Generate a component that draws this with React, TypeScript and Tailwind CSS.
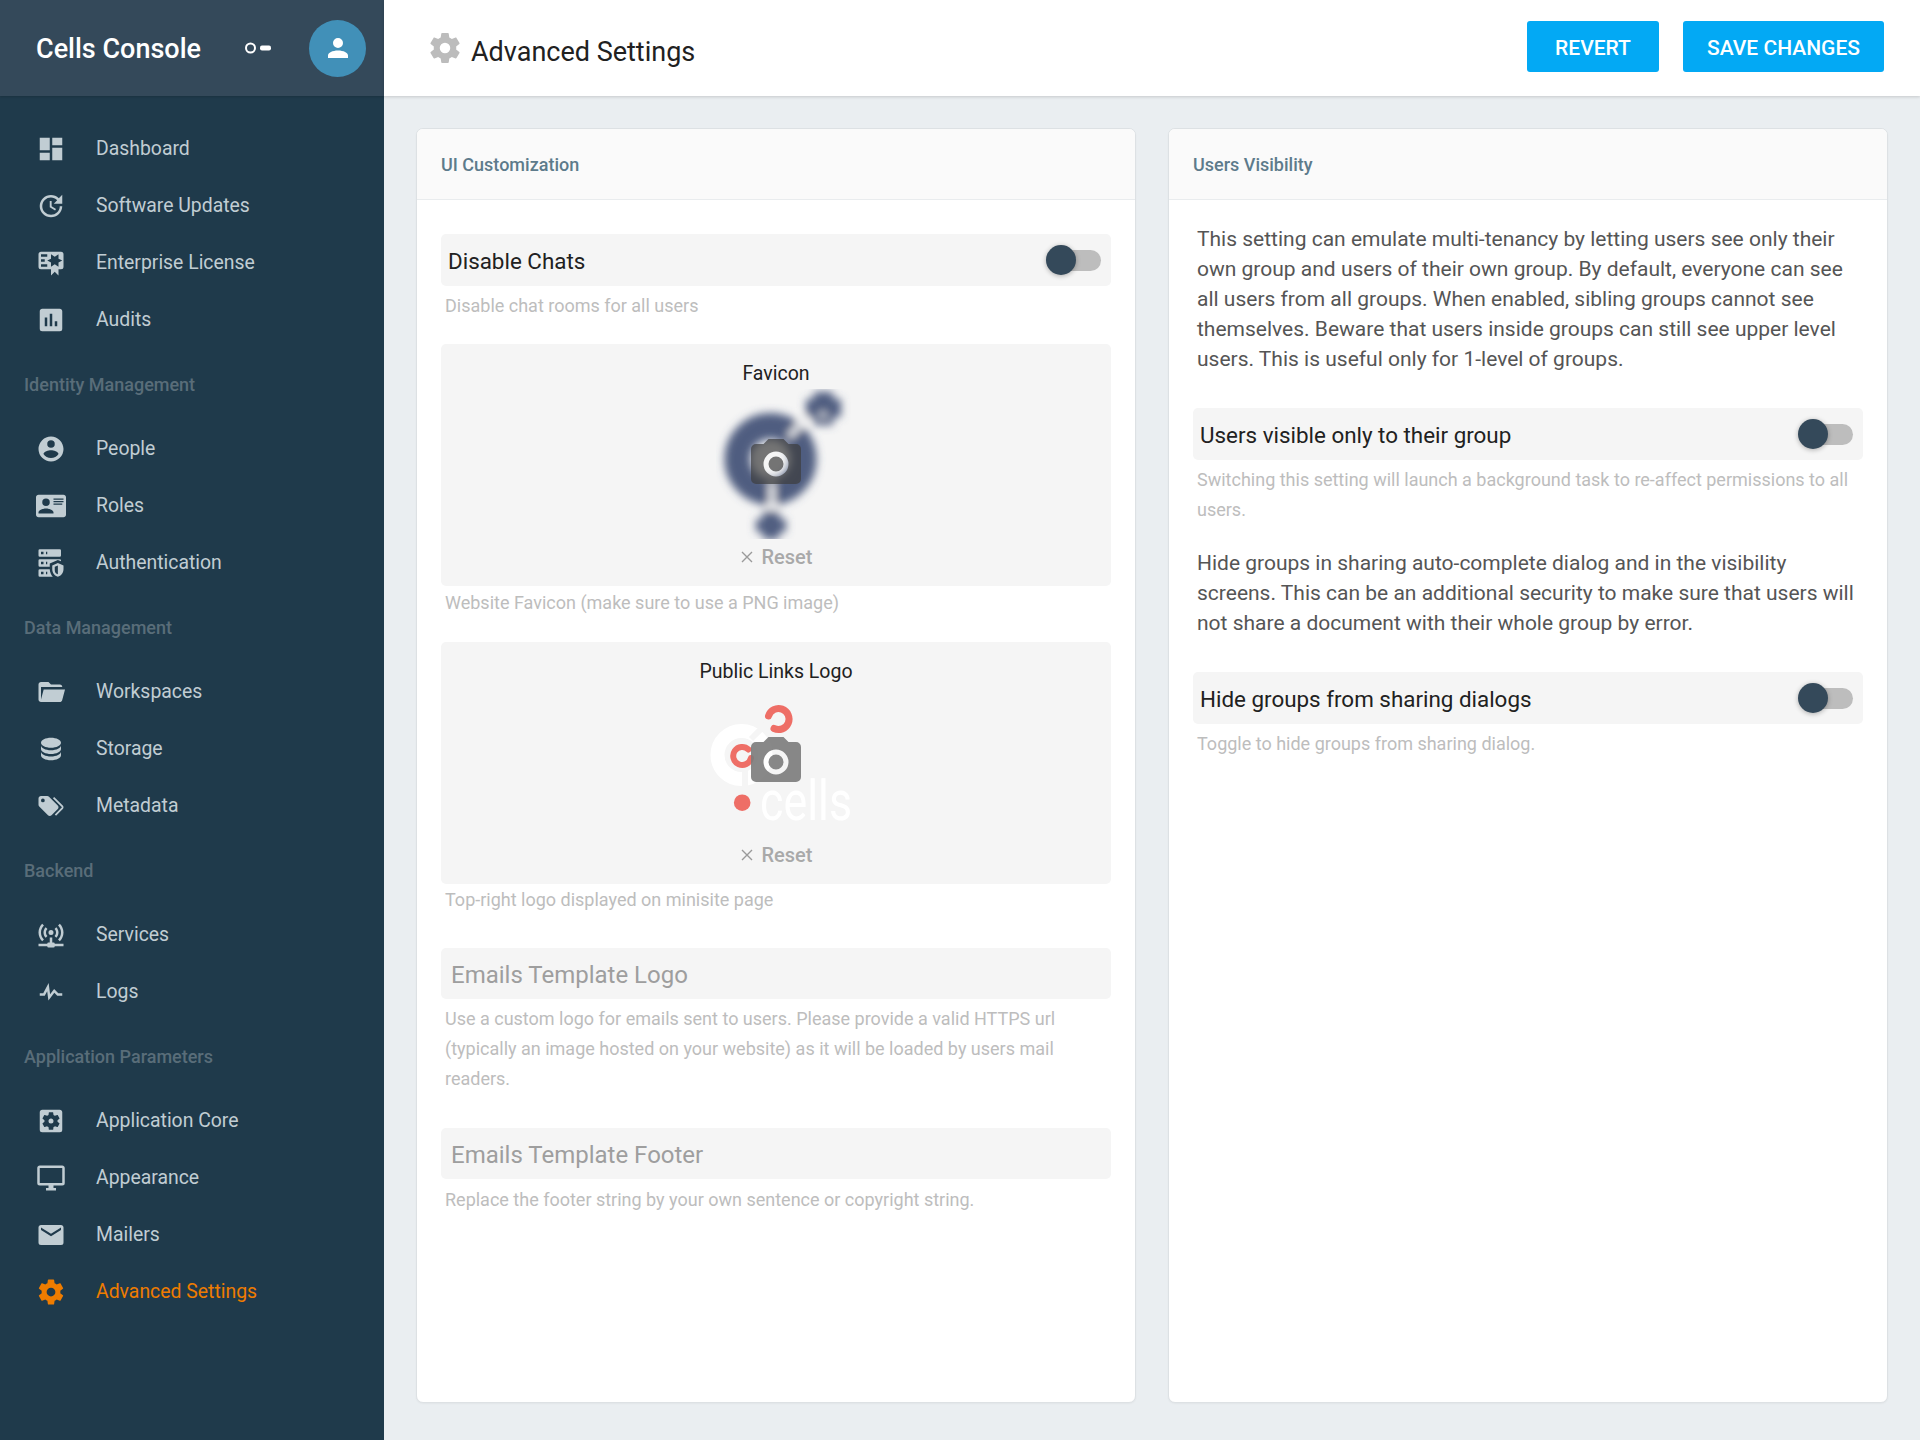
const P = {
  dashboard: "M13,3V9H21V3M13,21H21V11H13M3,21H11V15H3M3,13H11V3H3V13Z",
  update: "M21,10.12H14.22L16.96,7.3C14.23,4.6 9.81,4.5 7.08,7.2C4.35,9.91 4.35,14.28 7.08,17C9.81,19.7 14.23,19.7 16.96,17C18.32,15.65 19,14.08 19,12.1H21C21,14.08 20.12,16.65 18.36,18.39C14.85,21.87 9.15,21.87 5.64,18.39C2.14,14.92 2.11,9.28 5.62,5.81C9.13,2.34 14.76,2.34 18.27,5.81L21,3V10.12M12.5,8V12.25L16,14.33L15.28,15.54L11,13V8H12.5Z",
  certificate: "M4,3C2.89,3 2,3.89 2,5V15A2,2 0 0,0 4,17H12V22L15,19L18,22V17H20A2,2 0 0,0 22,15V8L22,6V5A2,2 0 0,0 20,3H16V3H4M12,5L15,7L18,5V8.5L21,10L18,11.5V15L15,13L12,15V11.5L9,10L12,8.5V5M4,5H9V7H4V5M4,9H7V11H4V9M4,13H9V15H4V13Z",
  poll: "M17,17H15V13H17M13,17H11V7H13M9,17H7V10H9M19,3H5C3.89,3 3,3.89 3,5V19A2,2 0 0,0 5,21H19A2,2 0 0,0 21,19V5C21,3.89 20.1,3 19,3Z",
  accountCircle: "M12,19.2C9.5,19.2 7.29,17.92 6,16C6.03,14 10,12.9 12,12.9C14,12.9 17.97,14 18,16C16.71,17.92 14.5,19.2 12,19.2M12,5A3,3 0 0,1 15,8A3,3 0 0,1 12,11A3,3 0 0,1 9,8A3,3 0 0,1 12,5M12,2A10,10 0 0,0 2,12A10,10 0 0,0 12,22A10,10 0 0,0 22,12C22,6.47 17.5,2 12,2Z",
  card: "M2,3H22C23.05,3 24,3.95 24,5V19C24,20.05 23.05,21 22,21H2C0.95,21 0,20.05 0,19V5C0,3.95 0.95,3 2,3M14,6V7H22V6H14M14,8V9H21.5L22,9V8H14M14,10V11H21V10H14M8,13.91C6,13.91 2,15 2,17V18H14V17C14,15 10,13.91 8,13.91M8,6A3,3 0 0,0 5,9A3,3 0 0,0 8,12A3,3 0 0,0 11,9A3,3 0 0,0 8,6Z",
  serverSecurity: "M3,1H19A1,1 0 0,1 20,2V6A1,1 0 0,1 19,7H3A1,1 0 0,1 2,6V2A1,1 0 0,1 3,1M3,9H19A1,1 0 0,1 20,10V10.67L17.5,9.56L11,12.44V15H3A1,1 0 0,1 2,14V10A1,1 0 0,1 3,9M3,17H11C11.06,19.25 12,21.4 13.46,23H3A1,1 0 0,1 2,22V18A1,1 0 0,1 3,17M8,5H9V3H8V5M8,13H9V11H8V13M8,21H9V19H8V21M4,3V5H6V3H4M4,11V13H6V11H4M4,19V21H6V19H4M17.5,12L22,14V17C22,19.78 20.08,22.37 17.5,23C14.92,22.37 13,19.78 13,17V14L17.5,12M17.5,13.94L15,15.06V17.72C15,19.26 16.07,20.7 17.5,21.06V13.94Z",
  folder: "M19,20H4C2.89,20 2,19.1 2,18V6C2,4.89 2.89,4 4,4H10L12,6H19A2,2 0 0,1 21,8H21L4,8V18L6.14,10H23.21L20.93,18.5C20.7,19.37 19.92,20 19,20Z",
  database: "M12,3C7.58,3 4,4.79 4,7C4,9.21 7.58,11 12,11C16.42,11 20,9.21 20,7C20,4.79 16.42,3 12,3M4,9V12C4,14.21 7.58,16 12,16C16.42,16 20,14.21 20,12V9C20,11.21 16.42,13 12,13C7.58,13 4,11.21 4,9M4,14V17C4,19.21 7.58,21 12,21C16.42,21 20,19.21 20,17V14C20,16.21 16.42,18 12,18C7.58,18 4,16.21 4,14Z",
  tags: "M5.5,9A1.5,1.5 0 0,0 7,7.5A1.5,1.5 0 0,0 5.5,6A1.5,1.5 0 0,0 4,7.5A1.5,1.5 0 0,0 5.5,9M17.41,11.58C17.77,11.94 18,12.44 18,13C18,13.55 17.78,14.05 17.41,14.41L12.41,19.41C12.05,19.77 11.55,20 11,20C10.45,20 9.95,19.78 9.58,19.41L2.59,12.42C2.22,12.05 2,11.55 2,11V6C2,4.89 2.89,4 4,4H9C9.55,4 10.05,4.22 10.41,4.58L17.41,11.58M13.54,5.71L14.54,4.71L21.41,11.58C21.78,11.94 22,12.45 22,13C22,13.55 21.78,14.05 21.42,14.41L16.04,19.79L15.04,18.79L20.75,13L13.54,5.71Z",
  network: "M4.93,2.93C3.12,4.74 2,7.24 2,10C2,12.76 3.12,15.26 4.93,17.07L6.34,15.66C4.89,14.22 4,12.22 4,10C4,7.79 4.89,5.78 6.34,4.34L4.93,2.93M19.07,2.93L17.66,4.34C19.11,5.78 20,7.79 20,10C20,12.22 19.11,14.22 17.66,15.66L19.07,17.07C20.88,15.26 22,12.76 22,10C22,7.24 20.88,4.74 19.07,2.93M7.76,5.76C6.67,6.85 6,8.35 6,10C6,11.65 6.67,13.15 7.76,14.24L9.17,12.83C8.45,12.11 8,11.11 8,10C8,8.89 8.45,7.89 9.17,7.17L7.76,5.76M16.24,5.76L14.83,7.17C15.55,7.89 16,8.89 16,10C16,11.11 15.55,12.11 14.83,12.83L16.24,14.24C17.33,13.15 18,11.65 18,10C18,8.35 17.33,6.85 16.24,5.76M12,8A2,2 0 0,0 10,10A2,2 0 0,0 12,12A2,2 0 0,0 14,10A2,2 0 0,0 12,8M11,14V18H10A1,1 0 0,0 9,19H2V21H9A1,1 0 0,0 10,22H14A1,1 0 0,0 15,21H22V19H15A1,1 0 0,0 14,18H13V14H11Z",
  pulse: "M3,13H5.79L10.1,4.79L11.28,13.75L14.5,9.66L17.83,13H21V15H17L14.67,12.67L9.92,18.73L8.94,11.31L7,15H3V13Z",
  settingsBox: "M17.25,12C17.25,12.23 17.23,12.46 17.2,12.68L18.68,13.84C18.81,13.95 18.85,14.13 18.76,14.29L17.36,16.71C17.27,16.86 17.09,16.92 16.93,16.86L15.19,16.16C14.83,16.44 14.43,16.67 14,16.85L13.75,18.7C13.72,18.87 13.57,19 13.4,19H10.6C10.43,19 10.28,18.87 10.25,18.7L10,16.85C9.56,16.67 9.17,16.44 8.81,16.16L7.07,16.86C6.91,16.92 6.73,16.86 6.64,16.71L5.24,14.29C5.15,14.13 5.19,13.95 5.32,13.84L6.8,12.68C6.77,12.46 6.75,12.23 6.75,12C6.75,11.77 6.77,11.54 6.8,11.32L5.32,10.16C5.19,10.05 5.15,9.87 5.24,9.71L6.64,7.29C6.73,7.14 6.91,7.08 7.07,7.14L8.81,7.84C9.17,7.56 9.56,7.33 10,7.15L10.25,5.3C10.28,5.13 10.43,5 10.6,5H13.4C13.57,5 13.72,5.13 13.75,5.3L14,7.15C14.43,7.33 14.83,7.56 15.19,7.84L16.93,7.14C17.09,7.08 17.27,7.14 17.36,7.29L18.76,9.71C18.85,9.87 18.81,10.05 18.68,10.16L17.2,11.32C17.23,11.54 17.25,11.77 17.25,12M19,3H5C3.89,3 3,3.89 3,5V19A2,2 0 0,0 5,21H19A2,2 0 0,0 21,19V5C21,3.89 20.1,3 19,3M12,10C10.89,10 10,10.89 10,12A2,2 0 0,0 12,14A2,2 0 0,0 14,12C14,10.89 13.1,10 12,10Z",
  monitor: "M21,16H3V4H21M21,2H3C1.89,2 1,2.89 1,4V16A2,2 0 0,0 3,18H10V20H8V22H16V20H14V18H21A2,2 0 0,0 23,16V4C23,2.89 22.1,2 21,2Z",
  email: "M20,8L12,13L4,8V6L12,11L20,6M20,4H4C2.89,4 2,4.89 2,6V18A2,2 0 0,0 4,20H20A2,2 0 0,0 22,18V6C22,4.89 21.1,4 20,4Z",
  settings: "M12,15.5A3.5,3.5 0 0,1 8.5,12A3.5,3.5 0 0,1 12,8.5A3.5,3.5 0 0,1 15.5,12A3.5,3.5 0 0,1 12,15.5M19.43,12.97C19.47,12.65 19.5,12.33 19.5,12C19.5,11.67 19.47,11.34 19.43,11L21.54,9.37C21.73,9.22 21.78,8.95 21.66,8.73L19.66,5.27C19.54,5.05 19.27,4.96 19.05,5.05L16.56,6.05C16.04,5.66 15.5,5.32 14.87,5.07L14.5,2.42C14.46,2.18 14.25,2 14,2H10C9.75,2 9.54,2.18 9.5,2.42L9.13,5.07C8.5,5.32 7.96,5.66 7.44,6.05L4.95,5.05C4.73,4.96 4.46,5.05 4.34,5.27L2.34,8.73C2.21,8.95 2.27,9.22 2.46,9.37L4.57,11C4.53,11.34 4.5,11.67 4.5,12C4.5,12.33 4.53,12.65 4.57,12.97L2.46,14.63C2.27,14.78 2.21,15.05 2.34,15.27L4.34,18.73C4.46,18.95 4.73,19.03 4.95,18.95L7.44,17.94C7.96,18.34 8.5,18.68 9.13,18.93L9.5,21.58C9.54,21.82 9.75,22 10,22H14C14.25,22 14.46,21.82 14.5,21.58L14.87,18.93C15.5,18.67 16.04,18.34 16.56,17.94L19.05,18.95C19.27,19.03 19.54,18.95 19.66,18.73L21.66,15.27C21.78,15.05 21.73,14.78 21.54,14.63L19.43,12.97Z",
  account: "M12,4A4,4 0 0,1 16,8A4,4 0 0,1 12,12A4,4 0 0,1 8,8A4,4 0 0,1 12,4M12,14C16.42,14 20,15.79 20,18V20H4V18C4,15.79 7.58,14 12,14Z",
  camera: "M4,4H7L9,2H15L17,4H20A2,2 0 0,1 22,6V18A2,2 0 0,1 20,20H4A2,2 0 0,1 2,18V6A2,2 0 0,1 4,4M12,7A5,5 0 0,0 7,12A5,5 0 0,0 12,17A5,5 0 0,0 17,12A5,5 0 0,0 12,7M12,9A3,3 0 0,1 15,12A3,3 0 0,1 12,15A3,3 0 0,1 9,12A3,3 0 0,1 12,9Z",
};

function Icon({ d, className }: { d: string; className: string }) {
  return (
    <svg viewBox="0 0 24 24" fill="currentColor" className={className}>
      <path d={d} />
    </svg>
  );
}

const NAV: { title?: string; items: { label: string; icon: string; active?: boolean }[] }[] = [
  {
    items: [
      { label: "Dashboard", icon: P.dashboard },
      { label: "Software Updates", icon: P.update },
      { label: "Enterprise License", icon: P.certificate },
      { label: "Audits", icon: P.poll },
    ],
  },
  {
    title: "Identity Management",
    items: [
      { label: "People", icon: P.accountCircle },
      { label: "Roles", icon: P.card },
      { label: "Authentication", icon: P.serverSecurity },
    ],
  },
  {
    title: "Data Management",
    items: [
      { label: "Workspaces", icon: P.folder },
      { label: "Storage", icon: P.database },
      { label: "Metadata", icon: P.tags },
    ],
  },
  {
    title: "Backend",
    items: [
      { label: "Services", icon: P.network },
      { label: "Logs", icon: P.pulse },
    ],
  },
  {
    title: "Application Parameters",
    items: [
      { label: "Application Core", icon: P.settingsBox },
      { label: "Appearance", icon: P.monitor },
      { label: "Mailers", icon: P.email },
      { label: "Advanced Settings", icon: P.settings, active: true },
    ],
  },
];

function Sidebar() {
  return (
    <aside className="w-[384px] h-full shrink-0 bg-[#1f3a4b] flex flex-col">
      <div className="h-[96px] bg-[#34495a] flex items-center pl-[36px] pr-[18px] shadow-[0_1px_2px_rgba(0,0,0,0.15)]">
        <span className="text-[27px] font-medium text-white leading-none mt-[2px]">Cells Console</span>
        <svg viewBox="0 0 26 12" className="w-[26px] h-[12px] ml-[44px] text-white" fill="none">
          <circle cx="5.5" cy="6" r="4.5" stroke="currentColor" strokeWidth="2" />
          <rect x="15" y="3.5" width="11" height="5" rx="2" fill="currentColor" />
        </svg>
        <div className="ml-auto w-[57px] h-[57px] rounded-full bg-[#4190b8] flex items-center justify-center">
          <Icon d={P.account} className="w-[30px] h-[30px] text-white" />
        </div>
      </div>
      <nav className="pt-[24px]">
        {NAV.map((g, i) => (
          <div key={i}>
            {g.title && (
              <div className="h-[72px] pl-[24px] flex items-center text-[18px] font-medium text-[#596d79]">
                {g.title}
              </div>
            )}
            {g.items.map((it) => (
              <div
                key={it.label}
                className={`h-[57px] flex items-center text-[19.4px] ${it.active ? "text-[#ef7c00]" : "text-[#c1cdd3]"}`}
              >
                <div className="w-[96px] pl-[36px] shrink-0 flex">
                  <Icon d={it.icon} className="w-[30px] h-[30px]" />
                </div>
                <span className="pt-[1px]">{it.label}</span>
              </div>
            ))}
          </div>
        ))}
      </nav>
    </aside>
  );
}

function Help({ children, className = "" }: { children: React.ReactNode; className?: string }) {
  return <div className={`pl-[4px] text-[18px] leading-[30px] text-[#bdbdbd] ${className}`}>{children}</div>;
}

function ToggleRow({ label }: { label: string }) {
  return (
    <div className="h-[52px] rounded-[5px] bg-[#f5f5f5] flex items-center justify-between pl-[7px] pr-[10px]">
      <span className="text-[22.4px] text-[#212121] pt-[3px]">{label}</span>
      <div className="relative w-[55px] h-[30px] flex items-center justify-end">
        <div className="w-[45px] h-[21px] rounded-full bg-[#bdbdbd]" />
        <div className="absolute left-0 top-0 w-[30px] h-[30px] rounded-full bg-[#34495a] shadow-[0_1px_5px_rgba(0,0,0,0.3)]" />
      </div>
    </div>
  );
}

function FaviconArt() {
  return (
    <svg viewBox="0 0 150 150" className="w-[150px] h-[150px]">
      <defs>
        <filter id="b1" x="-20%" y="-20%" width="140%" height="140%">
          <feGaussianBlur stdDeviation="4" />
        </filter>
      </defs>
      <g filter="url(#b1)">
        <circle cx="69.5" cy="70" r="33" fill="none" stroke="#4f5d80" strokeWidth="26" />
        <path d="M88 48 L108 26" stroke="#f5f5f5" strokeWidth="6" />
        <path d="M71 94 L71 122" stroke="#f5f5f5" strokeWidth="6" />
        <path d="M113 3 H132 V10 H140 V28 H132 V36 H113 V28 H105 V10 H113 Z" fill="#4f5d80" />
        <circle cx="122" cy="26" r="4" fill="#c9cdd6" />
        <path d="M62 122 H78 V130 H85 V143 H78 V150 H62 V143 H55 V130 H62 Z" fill="#4f5d80" />
      </g>
    </svg>
  );
}

function LogoArt() {
  return (
    <svg viewBox="0 0 150 150" className="w-[150px] h-[150px] overflow-visible">
      <circle cx="40.5" cy="68" r="24" fill="none" stroke="#ffffff" strokeWidth="14" />
      <path d="M50 52 L72 30" stroke="#f5f5f5" strokeWidth="6" />
      <path d="M44 84 L44 104" stroke="#f5f5f5" strokeWidth="6" />
      <path d="M67.5 29 A10.5 10.5 0 1 1 73 41.5" fill="none" stroke="#ee6e66" strokeWidth="7" strokeLinecap="round" />
      <path d="M47.5 62.5 A9 9 0 1 0 50 71" fill="none" stroke="#ee6e66" strokeWidth="6" strokeLinecap="round" />
      <circle cx="41.2" cy="115.7" r="8.3" fill="#ee6e66" />
      <text x="59" y="133" fontFamily="Roboto, sans-serif" fontWeight="400" fontSize="56" fill="#ffffff" textLength="92" lengthAdjust="spacingAndGlyphs">
        cells
      </text>
    </svg>
  );
}

function ImageField({ label, art, faded }: { label: string; art: React.ReactNode; faded?: boolean }) {
  return (
    <div className="h-[242px] rounded-[5px] bg-[#f5f5f5] flex flex-col items-center pt-[15px]">
      <div className="text-[19.5px] leading-[30px] text-[#212121]">{label}</div>
      <div className="relative w-[300px] h-[150px] flex items-start justify-center">
        {art}
        <div className="absolute inset-0 flex items-center justify-center">
          <Icon d={P.camera} className={`w-[60px] h-[60px] ${faded ? "text-[#3d3d3d]/70" : "text-[#7b7b7b]/90"}`} />
        </div>
      </div>
      <div className="flex items-center gap-[8px] text-[20px] leading-[30px] font-medium text-[#a9a9a9] mt-[3px]">
        <svg viewBox="0 0 14 14" className="w-[14px] h-[14px]" fill="none" stroke="#9a9a9a" strokeWidth="1.4">
          <path d="M2 2 L12 12 M12 2 L2 12" />
        </svg>
        <span>Reset</span>
      </div>
    </div>
  );
}

function TextField({ label }: { label: string }) {
  return (
    <div className="h-[51px] rounded-[5px] bg-[#f5f5f5] flex items-center pl-[10px] text-[24px] text-[#9e9e9e] pt-[3px]">
      {label}
    </div>
  );
}

function Card({ title, children }: { title: string; children: React.ReactNode }) {
  return (
    <section className="rounded-[7px] border border-[#dde1e4] bg-white overflow-hidden flex flex-col shadow-[0_1px_2px_rgba(0,0,0,0.04)]">
      <header className="h-[71px] shrink-0 bg-[#fafafa] border-b border-[#e9ecee] flex items-center pl-[24px] text-[18px] font-medium text-[#5d7b8b]">
        {title}
      </header>
      {children}
    </section>
  );
}

export default function App() {
  return (
    <div className="w-[1920px] h-[1440px] flex overflow-hidden font-['Roboto',sans-serif] bg-[#eaeef1]">
      <Sidebar />
      <main className="flex-1 flex flex-col min-w-0">
        <div className="h-[96px] shrink-0 bg-white shadow-[0_1px_3px_rgba(0,0,0,0.16)] flex items-center pl-[43px] pr-[36px]">
          <Icon d={P.settings} className="w-[36px] h-[36px] text-[#bcbcbc]" />
          <h1 className="ml-[8px] text-[27px] font-normal text-[#212121] leading-none mt-[8px]">Advanced Settings</h1>
          <div className="ml-auto flex gap-[24px] mb-[3px]">
            <button className="w-[132px] h-[51px] pt-[4px] rounded-[3px] bg-[#03a9f4] text-white text-[21px] font-medium">REVERT</button>
            <button className="w-[201px] h-[51px] pt-[4px] rounded-[3px] bg-[#03a9f4] text-white text-[21px] font-medium">SAVE CHANGES</button>
          </div>
        </div>
        <div className="flex-1 min-h-0 grid grid-cols-2 gap-[32px] pt-[32px] pl-[32px] pr-[32px] pb-[37px]">
          <Card title="UI Customization">
            <div className="px-[24px] pt-[34px]">
              <ToggleRow label="Disable Chats" />
              <Help className="mt-[5px]">Disable chat rooms for all users</Help>
              <div className="mt-[23px]">
                <ImageField label="Favicon" art={<FaviconArt />} faded />
              </div>
              <Help className="mt-[2px]">Website Favicon (make sure to use a PNG image)</Help>
              <div className="mt-[24px]">
                <ImageField label="Public Links Logo" art={<LogoArt />} />
              </div>
              <Help className="mt-[1px]">Top-right logo displayed on minisite page</Help>
              <div className="mt-[33px]">
                <TextField label="Emails Template Logo" />
              </div>
              <Help className="mt-[5px]">
                Use a custom logo for emails sent to users. Please provide a valid HTTPS url (typically an image hosted on your website) as it will be loaded by users mail readers.
              </Help>
              <div className="mt-[34px]">
                <TextField label="Emails Template Footer" />
              </div>
              <Help className="mt-[6px]">Replace the footer string by your own sentence or copyright string.</Help>
            </div>
          </Card>
          <Card title="Users Visibility">
            <div className="px-[24px] pt-[24px]">
              <p className="pl-[4px] text-[21px] leading-[30px] text-[#555555]">
                This setting can emulate multi-tenancy by letting users see only their own group and users of their own group. By default, everyone can see all users from all groups. When enabled, sibling groups cannot see themselves. Beware that users inside groups can still see upper level users. This is useful only for 1-level of groups.
              </p>
              <div className="mt-[34px]">
                <ToggleRow label="Users visible only to their group" />
              </div>
              <Help className="mt-[5px]">
                Switching this setting will launch a background task to re-affect permissions to all users.
              </Help>
              <p className="mt-[23px] pl-[4px] text-[21px] leading-[30px] text-[#555555]">
                Hide groups in sharing auto-complete dialog and in the visibility screens. This can be an additional security to make sure that users will not share a document with their whole group by error.
              </p>
              <div className="mt-[34px]">
                <ToggleRow label="Hide groups from sharing dialogs" />
              </div>
              <Help className="mt-[5px]">Toggle to hide groups from sharing dialog.</Help>
            </div>
          </Card>
        </div>
      </main>
    </div>
  );
}
